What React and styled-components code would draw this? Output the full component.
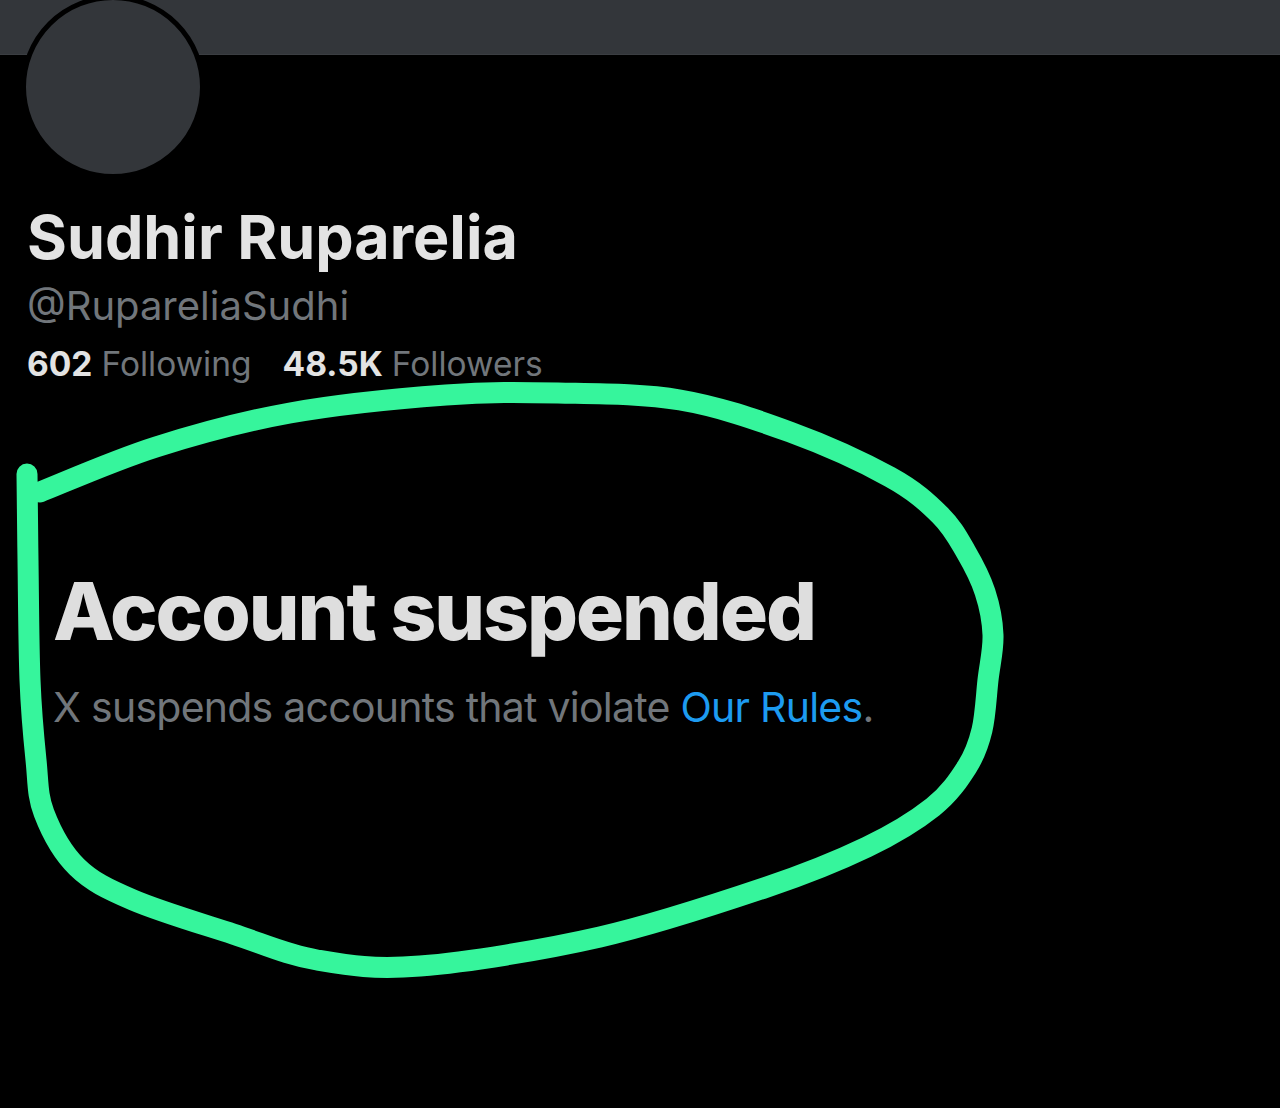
import React from "react";
import styled, { createGlobalStyle } from "styled-components";

const Global = createGlobalStyle`
  html, body { margin: 0; padding: 0; background: #000; }
  body { font-family: "Inter", "Noto Sans", sans-serif; }
`;

const Page = styled.div`
  position: relative;
  width: 1280px;
  height: 1108px;
  background: #000;
  overflow: hidden;
`;

const Banner = styled.div`
  height: 54px;
  background: #33363a;
  border-bottom: 1px solid #3b3e42;
`;

const Profile = styled.section`
  display: flex;
  flex-direction: column;
  padding: 0 0 0 27px;
`;

const Avatar = styled.div`
  width: 174px;
  height: 174px;
  border-radius: 50%;
  background: #33363a;
  border: 5px solid #000;
  margin: -60px 0 0 -6px;
`;

const Name = styled.h1`
  margin: 21px 0 0;
  font-size: 61px;
  font-weight: 700;
  line-height: 74px;
  color: #e3e3e3;
`;

const Handle = styled.div`
  margin-top: 8px;
  font-size: 40px;
  line-height: 48px;
  color: #71767b;
`;

const Stats = styled.div`
  display: flex;
  gap: 31px;
  margin-top: 14px;
  font-size: 33.5px;
  line-height: 40px;
`;

const Stat = styled.span`
  color: #71767b;
  b {
    color: #e3e3e3;
    font-weight: 700;
    margin-right: 9px;
  }
`;

const Suspended = styled.section`
  display: flex;
  flex-direction: column;
  padding: 179px 0 0 53px;
`;

const Title = styled.h2`
  margin: 0;
  font-size: 80px;
  font-weight: 800;
  line-height: 96px;
  color: #dedede;
  letter-spacing: -2px;
`;

const Note = styled.p`
  margin: 23px 0 0;
  font-size: 41px;
  line-height: 50px;
  color: #71767b;
  letter-spacing: -0.75px;
`;

const RulesLink = styled.a`
  color: #1d9bf0;
  text-decoration: none;
`;

const Scribble = styled.svg`
  position: absolute;
  left: 0;
  top: 0;
  pointer-events: none;
`;

const loop = [
  [27, 474], [28, 560], [30, 680], [36, 760], [44, 813], [77, 867], [133, 900],
  [233, 934], [317, 960], [420, 966], [600, 937], [767, 887], [867, 847],
  [933, 807], [967, 767], [982, 730], [988, 680], [993, 635], [985, 592],
  [966, 552], [940, 515], [890, 477], [790, 432], [680, 400], [558, 393],
  [446, 395], [290, 413], [156, 447], [40, 492],
];

function smoothPath(pts) {
  let d = `M${pts[0][0]} ${pts[0][1]}`;
  for (let i = 0; i < pts.length - 1; i++) {
    const p0 = pts[i - 1] || pts[i];
    const p1 = pts[i];
    const p2 = pts[i + 1];
    const p3 = pts[i + 2] || p2;
    const c1x = p1[0] + (p2[0] - p0[0]) / 6;
    const c1y = p1[1] + (p2[1] - p0[1]) / 6;
    const c2x = p2[0] - (p3[0] - p1[0]) / 6;
    const c2y = p2[1] - (p3[1] - p1[1]) / 6;
    d += ` C${c1x.toFixed(1)} ${c1y.toFixed(1)} ${c2x.toFixed(1)} ${c2y.toFixed(1)} ${p2[0]} ${p2[1]}`;
  }
  return d;
}

export default function App() {
  return (
    <Page>
      <Global />
      <Banner />
      <Profile>
        <Avatar />
        <Name>Sudhir Ruparelia</Name>
        <Handle>@RupareliaSudhi</Handle>
        <Stats>
          <Stat><b>602</b>Following</Stat>
          <Stat><b>48.5K</b>Followers</Stat>
        </Stats>
      </Profile>
      <Suspended>
        <Title>Account suspended</Title>
        <Note>
          X suspends accounts that violate <RulesLink href="#">Our Rules</RulesLink>.
        </Note>
      </Suspended>
      <Scribble width="1280" height="1108" viewBox="0 0 1280 1108">
        <path
          d={smoothPath(loop)}
          fill="none"
          stroke="#36f59c"
          strokeWidth="21"
          strokeLinecap="round"
          strokeLinejoin="round"
        />
      </Scribble>
    </Page>
  );
}
